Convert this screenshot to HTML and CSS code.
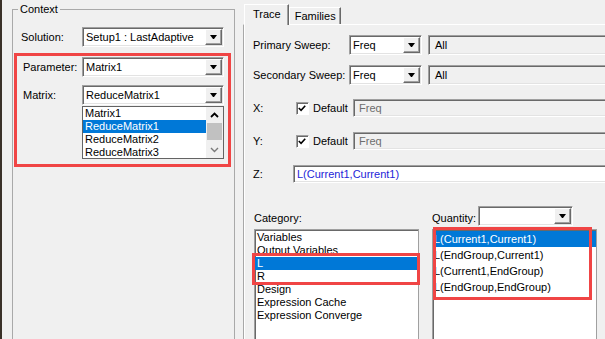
FILE: index.html
```html
<!DOCTYPE html>
<html lang="en">
<head>
    <meta charset="UTF-8">
    <title>Report - Context / Trace</title>
    <link rel="stylesheet" href="styles.css">
</head>
<body>
    <div class="edge"></div>

    <!-- Context panel -->
    <div class="left">
        <fieldset class="context">
            <legend>Context</legend>
            <div class="row solution">
                <span class="lbl lbl-sol">Solution:</span>
                <div class="combo wide"><span class="val">Setup1 : LastAdaptive</span><span class="btn"></span></div>
            </div>

            <div class="mark">
                <div class="row">
                    <span class="lbl lbl-par">Parameter:</span>
                    <div class="combo wide"><span class="val">Matrix1</span><span class="btn"></span></div>
                </div>
                <div class="matrix">
                    <span class="lbl">Matrix:</span>
                    <div class="combo wide"><span class="val">ReduceMatrix1</span><span class="btn"></span></div>
                    <div class="droplist">
                        <div class="items">
                            <div class="item">Matrix1</div>
                            <div class="item sel">ReduceMatrix1</div>
                            <div class="item">ReduceMatrix2</div>
                            <div class="item">ReduceMatrix3</div>
                        </div>
                        <div class="scroll">
                            <div class="arrow">
                                <svg width="9" height="6" viewBox="0 0 9 6"><polyline points="1,5 4.5,1.5 8,5" fill="none" stroke="#000" stroke-width="1.8"/></svg>
                            </div>
                            <div class="thumb"></div>
                            <div class="arrow down">
                                <svg width="9" height="6" viewBox="0 0 9 6"><polyline points="1,1 4.5,4.5 8,1" fill="none" stroke="#7a7a7a" stroke-width="1.4"/></svg>
                            </div>
                        </div>
                    </div>
                </div>
            </div>
        </fieldset>
    </div>

    <!-- Trace / Families -->
    <div class="right">
        <div class="tabs">
            <span class="tab active">Trace</span>
            <span class="tab">Families</span>
        </div>
        <div class="page">
            <div class="row sweep">
                <span class="lbl lbl-sweep">Primary Sweep:</span>
                <div class="combo small"><span class="val">Freq</span><span class="btn"></span></div>
                <div class="field ro">All</div>
            </div>
            <div class="row sweep second">
                <span class="lbl lbl-sweep">Secondary Sweep:</span>
                <div class="combo small"><span class="val">Freq</span><span class="btn"></span></div>
                <div class="field ro">All</div>
            </div>

            <div class="row axis">
                <span class="lbl lbl-axis">X:</span>
                <span class="check">
                    <svg width="13" height="13" viewBox="0 0 13 13"><polyline points="3,6 5.5,8.5 10,3.5" fill="none" stroke="#000" stroke-width="1.7"/></svg>
                </span>
                <span class="dflt">Default</span>
                <div class="field off">Freq</div>
            </div>
            <div class="row axis">
                <span class="lbl lbl-axis">Y:</span>
                <span class="check">
                    <svg width="13" height="13" viewBox="0 0 13 13"><polyline points="3,6 5.5,8.5 10,3.5" fill="none" stroke="#000" stroke-width="1.7"/></svg>
                </span>
                <span class="dflt">Default</span>
                <div class="field off">Freq</div>
            </div>
            <div class="row axis">
                <span class="lbl lbl-z">Z:</span>
                <div class="field expr">L(Current1,Current1)</div>
            </div>

            <div class="lists">
                <div class="col cat">
                    <div class="head"><span>Category:</span></div>
                    <div class="listbox">
                        <div class="item">Variables</div>
                        <div class="item">Output Variables</div>
                        <div class="item sel">L</div>
                        <div class="item">R</div>
                        <div class="item">Design</div>
                        <div class="item">Expression Cache</div>
                        <div class="item">Expression Converge</div>
                    </div>
                    <div class="hl hl-cat"></div>
                </div>
                <div class="col qty">
                    <div class="head">
                        <span class="lbl-qty">Quantity:</span>
                        <div class="combo qcombo"><span class="val"></span><span class="btn"></span></div>
                    </div>
                    <div class="listbox tall">
                        <div class="item sel">L(Current1,Current1)</div>
                        <div class="item">L(EndGroup,Current1)</div>
                        <div class="item">L(Current1,EndGroup)</div>
                        <div class="item">L(EndGroup,EndGroup)</div>
                    </div>
                    <div class="hl hl-qty"></div>
                </div>
            </div>
        </div>
    </div>
</body>
</html>
```

FILE: styles.css
```css
* {
    box-sizing: border-box;
}

body {
    margin: 0;
    width: 605px;
    height: 339px;
    overflow: hidden;
    display: flex;
    background-color: #f0f0f0;
    font-family: "Liberation Sans", Arial, sans-serif;
    font-size: 11px;
    color: #000;
}

.edge {
    width: 2px;
    flex: none;
    background-color: #3a3128;
}

.row {
    display: flex;
    align-items: center;
}

.lbl {
    flex: none;
}

/* Context panel */
.left {
    width: 241px;
    flex: none;
}

.context {
    margin: 3px 0 0 10px;
    width: 223px;
    height: 337px;
    padding: 0;
    border: 1px solid #a9a9a9;
}

.context legend {
    margin-left: 5px;
    padding: 0 2px;
    line-height: 13px;
}

.solution {
    margin-top: 11px;
    padding-left: 8px;
}

.lbl-sol { width: 61px; }
.lbl-par { width: 59px; }

/* red annotation frame */
.mark {
    margin: 6px 0 0 1px;
    width: 217px;
    padding: 1px 4px 5px 6px;
    border: 3px solid #f04545;
}

.matrix {
    margin-top: 8px;
    display: grid;
    grid-template-columns: 59px 142px;
    align-items: center;
}

/* combo boxes */
.combo {
    height: 20px;
    display: flex;
    align-items: center;
    padding: 0 1px 0 2px;
    background-color: #fff;
    border: 1px solid;
    border-color: #a0a0a0 #fff #fff #a0a0a0;
    box-shadow: inset 1px 1px 0 #696969, inset -1px -1px 0 #e3e3e3;
}

.combo .val {
    flex: 1;
    white-space: nowrap;
    overflow: hidden;
    padding-left: 1px;
}

.combo .btn {
    width: 17px;
    height: 16px;
    flex: none;
    display: flex;
    align-items: center;
    justify-content: center;
    background-color: #f0f0f0;
    border: 1px solid;
    border-color: #fff #696969 #696969 #fff;
    box-shadow: inset -1px -1px 0 #a0a0a0;
}

.combo .btn::after {
    content: "";
    width: 1px;
    border-left: 3px solid transparent;
    border-right: 3px solid transparent;
    border-top: 4px solid #000;
}

.wide { width: 142px; }
.small { width: 73px; }
.qcombo { width: 95px; }

.droplist {
    grid-column: 2;
    margin-top: 1px;
    height: 53px;
    display: flex;
    background-color: #fff;
    border: 1px solid #646464;
    overflow: hidden;
}

.droplist .items {
    flex: 1;
}

.item {
    line-height: 13px;
    padding-left: 2px;
    white-space: nowrap;
}

.item.sel {
    background-color: #0078d7;
    color: #fff;
}

.scroll {
    width: 17px;
    display: flex;
    flex-direction: column;
    background-color: #f0f0f0;
}

.scroll .arrow {
    height: 16px;
    display: flex;
    align-items: center;
    justify-content: center;
}

.scroll .thumb {
    height: 17px;
    margin: 0 1px;
    background-color: #c1c1c1;
}

.scroll .down {
    margin-top: 2px;
}

/* Tabs */
.right {
    flex: 1;
    overflow: hidden;
    padding-top: 4px;
}

.tabs {
    height: 20px;
    display: flex;
    align-items: flex-end;
    padding-left: 1px;
    position: relative;
    z-index: 1;
}

.tab {
    height: 17px;
    padding: 1px 4px 0 5px;
    line-height: 14px;
    background-color: #f0f0f0;
    border: 1px solid;
    border-bottom: none;
    border-color: #fff #696969 #fff #fff;
    box-shadow: inset -1px 0 0 #a0a0a0;
}

.tab.active {
    height: 21px;
    margin-bottom: -1px;
    padding: 2px 7px 0 8px;
}

.page {
    width: 390px;
    height: 315px;
    padding: 10px 0 0 9px;
    border-top: 1px solid #fff;
    border-left: 1px solid #a8a8a8;
    box-shadow: inset 1px 0 0 #fff;
}

.sweep .lbl-sweep { width: 96px; }

.second {
    margin-top: 10px;
}

.field {
    flex: 1;
    height: 20px;
    display: flex;
    align-items: center;
    white-space: nowrap;
    border: 1px solid;
    border-color: #a0a0a0 #fff #fff #a0a0a0;
    box-shadow: inset 1px 1px 0 #696969, inset -1px -1px 0 #e3e3e3;
}

.field.ro {
    margin-left: 6px;
    padding-left: 6px;
}

.axis {
    margin-top: 15px;
}

.sweep.second + .axis {
    margin-top: 14px;
}

.lbl-axis { width: 43px; }
.lbl-z { width: 40px; }

.check {
    width: 13px;
    height: 13px;
    flex: none;
    background-color: #fff;
    border: 1px solid;
    border-color: #a0a0a0 #fff #fff #a0a0a0;
    box-shadow: inset 1px 1px 0 #696969;
    display: flex;
}

.check svg {
    margin: -1px 0 0 -1px;
}

.dflt {
    width: 44px;
    flex: none;
    padding-left: 4px;
}

.field.off {
    height: 18px;
    padding-left: 5px;
    color: #6d6d6d;
}

.field.expr {
    height: 18px;
    padding-left: 3px;
    background-color: #fff;
    color: #2424d8;
}

/* Category / Quantity */
.lists {
    margin-top: 23px;
    display: flex;
}

.col {
    position: relative;
    width: 165px;
}

.col.cat {
    margin-left: 1px;
}

.col.qty {
    margin-left: 13px;
}

.head {
    height: 20px;
    display: flex;
    align-items: center;
    padding-top: 3px;
}

.lbl-qty {
    width: 46px;
    padding-top: 4px;
}

.qty .head {
    padding-top: 0;
}

.listbox {
    margin-top: 3px;
    height: 111px;
    padding-top: 1px;
    background-color: #fff;
    border: 1px solid #a0a0a0;
    border-bottom: none;
    box-shadow: inset 1px 1px 0 #696969;
}

.listbox.tall .item {
    line-height: 16px;
    padding-left: 1px;
}

.hl {
    position: absolute;
    border: 3px solid #f04545;
}

.hl-cat {
    left: -2px;
    top: 47px;
    width: 168px;
    height: 32px;
}

.hl-qty {
    left: 1px;
    top: 21px;
    width: 159px;
    height: 73px;
}
```
